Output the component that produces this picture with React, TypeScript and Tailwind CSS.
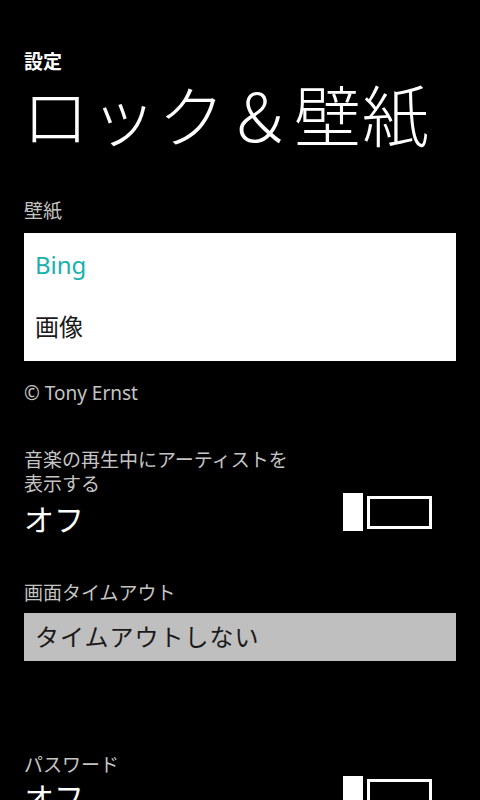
import React from 'react'

const jp = { fontFamily: '"Noto Sans", "Noto Sans CJK JP", sans-serif' }

function Toggle() {
  return (
    <div className="flex items-center gap-[4px]">
      <div className="w-[20px] h-[38px] bg-white" />
      <div className="w-[65px] h-[33px] border-[3px] border-white" />
    </div>
  )
}

export default function App() {
  return (
    <div className="w-[480px] h-[800px] bg-black overflow-hidden text-white" style={jp}>
      <div className="px-6 pt-[48px]">
        <p className="text-[19px] font-bold leading-[28px]">設定</p>
        <h1 className="text-[67px] font-light leading-[80px] -ml-[2px] tracking-[1px]">ロック＆壁紙</h1>

        <p className="mt-[42px] text-[19px] leading-[26px] text-[#c4c4c4]">壁紙</p>
        <div className="mt-[9px] h-[128px] bg-white flex flex-col pl-[11px]">
          <p className="mt-[15px] text-[24px] leading-[34px] text-[#17b0ae]">Bing</p>
          <p className="mt-[28px] text-[24px] leading-[34px] text-[#1a1a1a]">画像</p>
        </div>
        <p className="mt-[18px] text-[19px] leading-[28px] text-[#c4c4c4]">© Tony Ernst</p>

        <div className="mt-[41px] flex items-end justify-between pr-[24px]">
          <div>
            <p className="text-[19px] leading-[24px] text-[#c4c4c4]">
              音楽の再生中にアーティストを
              <br />
              表示する
            </p>
            <p className="mt-[4px] text-[30px] leading-[40px]">オフ</p>
          </div>
          <div className="mb-[9px]">
            <Toggle />
          </div>
        </div>

        <p className="mt-[40px] text-[19px] leading-[26px] text-[#c4c4c4]">画面タイムアウト</p>
        <div className="mt-[7px] h-[48px] bg-[#bfbfbf] flex items-center pl-[11px]">
          <p className="text-[24px] leading-[34px] text-[#1a1a1a] tracking-[1px]">タイムアウトしない</p>
        </div>

        <div className="mt-[91px] flex items-end justify-between pr-[24px]">
          <div>
            <p className="text-[19px] leading-[26px] text-[#c4c4c4]">パスワード</p>
            <p className="text-[30px] leading-[40px]">オフ</p>
          </div>
          <div className="mb-[4px]">
            <Toggle />
          </div>
        </div>
      </div>
    </div>
  )
}
